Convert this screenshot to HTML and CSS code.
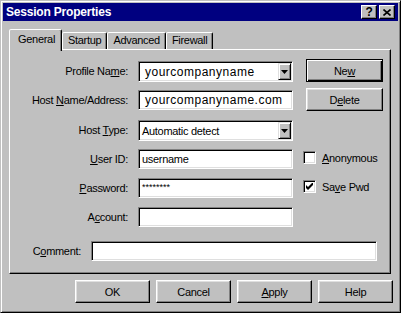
FILE: index.html
```html
<!DOCTYPE html>
<html lang="en">
<head>
    <meta charset="UTF-8">
    <title>Session Properties</title>
    <link rel="stylesheet" href="styles.css">
</head>
<body>
    <div class="window">
        <div class="titlebar">
            <span class="title">Session Properties</span>
            <div class="caption-buttons">
                <span class="caption-btn help">?</span>
                <span class="caption-btn close">
                    <svg width="8" height="7" viewBox="0 0 8 7"><path d="M0.5 0.5 L7.5 6.5 M7.5 0.5 L0.5 6.5" stroke="#000" stroke-width="1.6" fill="none"/></svg>
                </span>
            </div>
        </div>

        <div class="tabs">
            <div class="tab active">General</div>
            <div class="tab">Startup</div>
            <div class="tab">Advanced</div>
            <div class="tab">Firewall</div>
        </div>

        <div class="panel">
            <div class="form-grid">
                <div class="label"><span>Profile Na<u>m</u>e:</span></div>
                <div class="combo">
                    <span class="field-text big">yourcompanyname</span>
                    <span class="combo-arrow"><svg width="7" height="4" viewBox="0 0 7 4"><path d="M0 0 H7 L3.5 4 Z" fill="#000"/></svg></span>
                </div>
                <div class="side"><span class="btn default"><span>Ne<u>w</u></span></span></div>

                <div class="label"><span>Host <u>N</u>ame/Address:</span></div>
                <div class="edit"><span class="field-text big">yourcompanyname.com</span></div>
                <div class="side"><span class="btn"><span>D<u>e</u>lete</span></span></div>

                <div class="label"><span>Host <u>T</u>ype:</span></div>
                <div class="combo">
                    <span class="field-text">Automatic detect</span>
                    <span class="combo-arrow"><svg width="7" height="4" viewBox="0 0 7 4"><path d="M0 0 H7 L3.5 4 Z" fill="#000"/></svg></span>
                </div>
                <div class="side"></div>

                <div class="label"><span><u>U</u>ser ID:</span></div>
                <div class="edit"><span class="field-text">username</span></div>
                <div class="side">
                    <span class="check"><span class="checkbox"></span><span><u>A</u>nonymous</span></span>
                </div>

                <div class="label"><span><u>P</u>assword:</span></div>
                <div class="edit"><span class="field-text secret">********</span></div>
                <div class="side">
                    <span class="check">
                        <span class="checkbox"><svg width="7" height="7" viewBox="0 0 7 7"><path d="M0 2 L2 4 L7 -1 L7 2 L2 7 L0 5 Z" fill="#000"/></svg></span>
                        <span>Sa<u>v</u>e Pwd</span>
                    </span>
                </div>

                <div class="label"><span>A<u>c</u>count:</span></div>
                <div class="edit"></div>
                <div class="side"></div>
            </div>

            <div class="comment-row">
                <div class="label comment-label"><span>C<u>o</u>mment:</span></div>
                <div class="edit comment-edit"></div>
            </div>
        </div>

        <div class="actions">
            <span class="btn">OK</span>
            <span class="btn">Cancel</span>
            <span class="btn"><span><u>A</u>pply</span></span>
            <span class="btn">Help</span>
        </div>
    </div>
</body>
</html>
```

FILE: styles.css
```css
* {
    box-sizing: border-box;
}

body {
    margin: 0;
    font-family: "Liberation Sans", Arial, sans-serif;
    font-size: 11px;
    letter-spacing: -0.3px;
    color: #000;
    background: #c0c0c0;
}

u {
    text-decoration: underline;
    text-underline-offset: 1px;
}

.window {
    width: 401px;
    height: 313px;
    background: #c0c0c0;
    border: 1px solid;
    border-color: #c0c0c0 #000 #000 #c0c0c0;
    box-shadow: inset 1px 1px #fff, inset -1px -1px #808080;
    padding: 2px;
}

.titlebar {
    height: 18px;
    background: #000080;
    display: flex;
    align-items: center;
    justify-content: space-between;
    padding: 0 3px 0 3px;
}

.title {
    color: #fff;
    font-weight: bold;
    font-size: 12px;
    letter-spacing: -0.2px;
}

.caption-buttons {
    display: flex;
    gap: 2px;
}

.caption-btn {
    width: 16px;
    height: 14px;
    display: flex;
    align-items: center;
    justify-content: center;
    background: #c0c0c0;
    border: 1px solid;
    border-color: #fff #000 #000 #fff;
    box-shadow: inset -1px -1px #808080;
    font-weight: bold;
    font-size: 12px;
    line-height: 1;
}

.tabs {
    display: flex;
    align-items: flex-end;
    height: 28px;
    padding-left: 6px;
    position: relative;
    z-index: 1;
}

.tab {
    height: 17px;
    padding: 1px 5px 0;
    border: 1px solid;
    border-bottom: none;
    border-color: #fff #000 transparent #fff;
    border-radius: 2px 2px 0 0;
    box-shadow: inset -1px 0 #808080;
    background: #c0c0c0;
}

.tab.active {
    height: 22px;
    padding: 3px 0 0 8px;
    margin-bottom: -2px;
    width: 53px;
}

.panel {
    margin-left: 6px;
    width: 382px;
    height: 225px;
    border: 1px solid;
    border-color: #fff #000 #000 #fff;
    box-shadow: inset -1px -1px #808080;
    padding-top: 11px;
}

.form-grid {
    display: grid;
    grid-template-columns: 118px 155px 80px;
    grid-template-rows: 29px 30px 29px 29px 29px 20px;
    column-gap: 10px;
}

.label {
    height: 20px;
    display: flex;
    align-items: center;
    justify-content: flex-end;
    white-space: nowrap;
}

.edit,
.combo {
    height: 20px;
    background: #fff;
    border: 1px solid;
    border-color: #808080 #fff #fff #808080;
    box-shadow: inset 1px 1px #000, inset -1px -1px #dfdfdf;
    display: flex;
    align-items: center;
    padding-left: 3px;
    position: relative;
}

.combo {
    height: 21px;
}

.field-text {
    white-space: nowrap;
}

.field-text.big {
    font-size: 12px;
    letter-spacing: 0.5px;
    padding-left: 3px;
}

.field-text.secret {
    font-size: 9px;
    letter-spacing: 0;
    align-self: flex-start;
    padding-top: 3px;
}

.combo-arrow {
    position: absolute;
    right: 1px;
    top: 1px;
    width: 13px;
    height: 17px;
    background: #c0c0c0;
    border: 1px solid;
    border-color: #dfdfdf #000 #000 #dfdfdf;
    box-shadow: inset 1px 1px #fff, inset -1px -1px #808080;
    display: flex;
    align-items: center;
    justify-content: center;
}

.side {
    height: 20px;
}

.btn {
    width: 75px;
    height: 23px;
    display: flex;
    align-items: center;
    justify-content: center;
    background: #c0c0c0;
    border: 1px solid;
    border-color: #fff #000 #000 #fff;
    box-shadow: inset -1px -1px #808080, inset 1px 1px #dfdfdf;
}

.side .btn {
    width: 77px;
    margin: -2px 0 0 3px;
}

.btn.default {
    border: 1px solid #000;
    box-shadow: inset 1px 1px #fff, inset -1px -1px #000, inset -2px -2px #808080;
}

.check {
    display: flex;
    align-items: center;
    gap: 6px;
    height: 17px;
}

.checkbox {
    width: 13px;
    height: 13px;
    background: #fff;
    border: 1px solid;
    border-color: #808080 #fff #fff #808080;
    box-shadow: inset 1px 1px #000, inset -1px -1px #dfdfdf;
    display: flex;
    align-items: center;
    justify-content: center;
}

.comment-row {
    display: flex;
    column-gap: 10px;
    margin-top: 14px;
}

.comment-label {
    width: 71px;
}

.comment-edit {
    width: 286px;
}

.actions {
    display: flex;
    justify-content: flex-end;
    gap: 6px;
    margin-top: 6px;
    padding-right: 5px;
}
```
